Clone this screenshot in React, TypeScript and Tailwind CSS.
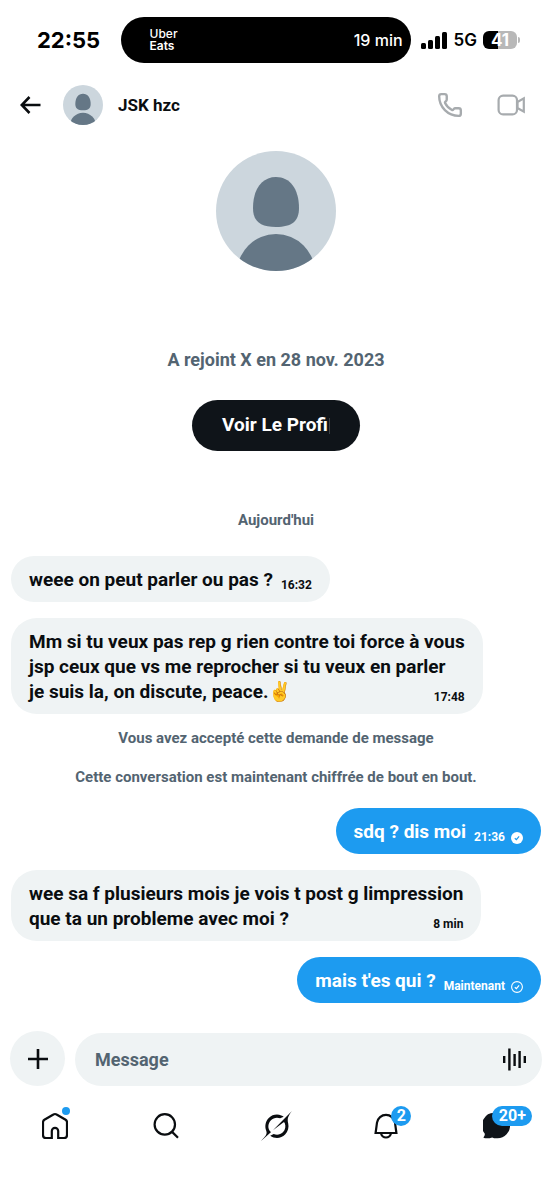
import { Phone } from "lucide-react";
import clsx from "clsx";

type Message = {
  text: string;
  time: string;
  mine?: boolean;
  status?: "read" | "sent";
};

type Entry = Message | { notice: string };

const entries: Entry[] = [
  { text: "weee on peut parler ou pas ?", time: "16:32" },
  {
    text: "Mm si tu veux pas rep g rien contre toi force à vous\njsp ceux que vs me reprocher si tu veux en parler\nje suis la, on discute, peace.✌️",
    time: "17:48",
  },
  { notice: "Vous avez accepté cette demande de message" },
  { notice: "Cette conversation est maintenant chiffrée de bout en bout." },
  { text: "sdq ? dis moi", time: "21:36", mine: true, status: "read" },
  {
    text: "wee sa f plusieurs mois je vois t post g limpression\nque ta un probleme avec moi ?",
    time: "8 min",
  },
  { text: "mais t'es qui ?", time: "Maintenant", mine: true, status: "sent" },
];

function Avatar({ className }: { className: string }) {
  return (
    <svg viewBox="0 0 120 120" className={clsx("shrink-0 rounded-full", className)} aria-hidden="true">
      <rect width="120" height="120" fill="#ccd6dd" />
      <path
        d="M60 26c14 0 23 12 23 31 0 13-7 19-23 19s-23-6-23-19c0-19 9-31 23-31z"
        fill="#657786"
      />
      <circle cx="60" cy="122" r="39" fill="#657786" />
    </svg>
  );
}

function StatusBar() {
  return (
    <div className="flex items-center pt-[17px] pr-8 pl-[37px] font-[Inter,sans-serif] text-black">
      <span className="flex-1 text-[22px] leading-7 font-bold">22:55</span>
      <div className="flex h-[46px] w-[290px] items-center justify-between rounded-full bg-black pr-2 pl-[29px] text-white">
        <div className="text-xs leading-3">
          <div className="font-medium">Uber</div>
          <div className="font-semibold">Eats</div>
        </div>
        <span className="text-base font-medium">19 min</span>
      </div>
      <div className="flex flex-1 items-center gap-[6px] pl-[10px]">
        <svg width="27" height="17" viewBox="0 0 27 17" className="shrink-0" aria-hidden="true">
          <rect x="0" y="11" width="5" height="6" rx="1.5" />
          <rect x="7" y="8" width="5" height="9" rx="1.5" />
          <rect x="14" y="4" width="5" height="13" rx="1.5" />
          <rect x="21" y="0" width="5" height="17" rx="1.5" />
        </svg>
        <span className="text-[17px] leading-7 font-semibold">5G</span>
        <div className="flex shrink-0 items-center gap-px">
          <div className="flex h-[18px] w-[34px] items-center justify-center rounded-md bg-[linear-gradient(90deg,#000_44%,#b8b8b8_44%)] text-[17px] leading-none font-bold text-white">
            41
          </div>
          <div className="h-[6px] w-[2px] rounded-r-full bg-[#b8b8b8]" />
        </div>
      </div>
    </div>
  );
}

function Header() {
  return (
    <header className="flex items-center pt-[22px] pr-[27px] pl-5">
      <button type="button" aria-label="Retour" className="mr-[22px]">
        <svg width="21" height="18" viewBox="0 0 21 18" fill="none" stroke="currentColor" strokeWidth="2.6">
          <path d="M9.500 1L1.800 9l7.700 8M1.800 9H20.500" />
        </svg>
      </button>
      <Avatar className="size-10" />
      <h1 className="ml-[15px] flex-1 text-[17px] leading-6 font-bold">JSK hzc</h1>
      <button type="button" aria-label="Appel audio" className="mr-[34px] text-[#a7abae]">
        <Phone size={26} strokeWidth={2.2} />
      </button>
      <button type="button" aria-label="Appel vidéo" className="text-[#a7abae]">
        <svg width="28" height="22" viewBox="0 0 28 22" fill="none" stroke="currentColor" strokeWidth="2.2">
          <rect x="1.6" y="1.6" width="18.4" height="18.8" rx="4.5" />
          <path d="M20.500 8l6.300-3.600v13.200L20.500 14z" />
        </svg>
      </button>
    </header>
  );
}

function StatusIcon({ status }: { status: "read" | "sent" }) {
  return (
    <svg width="12" height="12" viewBox="0 0 12 12" fill="none" className="shrink-0" aria-hidden="true">
      {status === "read" ? (
        <circle cx="6" cy="6" r="6" fill="#fff" />
      ) : (
        <circle cx="6" cy="6" r="5.4" stroke="#fff" strokeWidth="1.1" />
      )}
      <path d="M3.8 6.2l1.6 1.5 2.7-3.4" stroke={status === "read" ? "#1d9bf0" : "#fff"} strokeWidth="1.2" />
    </svg>
  );
}

function Bubble({ text, time, mine, status }: Message) {
  return (
    <li
      className={clsx(
        "max-w-[90%] rounded-[26px] px-[18px] pt-[11px] pb-[10px] text-[19px] leading-[25px] font-bold whitespace-pre-line",
        mine ? "self-end bg-[#1d9bf0] text-white" : "self-start bg-[#eff3f4]",
      )}
    >
      {text}
      <span className="float-right mt-[11px] -mb-1 ml-2 flex items-center gap-[6px] text-xs leading-[15px]">
        {time}
        {status && <StatusIcon status={status} />}
      </span>
    </li>
  );
}

function Composer() {
  return (
    <form className="mt-7 flex items-end gap-[10px] px-[10px]" onSubmit={(e) => e.preventDefault()}>
      <button
        type="button"
        aria-label="Ajouter"
        className="flex size-[55px] shrink-0 items-center justify-center rounded-full bg-[#eff3f4]"
      >
        <svg width="20" height="20" viewBox="0 0 20 20" stroke="currentColor" strokeWidth="2.6" aria-hidden="true">
          <path d="M10 0v20M0 10h20" />
        </svg>
      </button>
      <div className="flex h-[53px] flex-1 items-center rounded-full bg-[#eff3f4] pr-4 pl-5">
        <input
          type="text"
          aria-label="Message"
          placeholder="Message"
          className="min-w-0 flex-1 bg-transparent text-[18px] font-bold outline-none placeholder:text-[#536471]"
        />
        <button type="button" aria-label="Message vocal">
          <svg width="23" height="24" viewBox="0 0 23 24" stroke="currentColor" strokeWidth="2.4" aria-hidden="true">
            <path d="M1.2 8v7M6.4 .5v22M11.6 6v12M16.6 3v17M21.8 8v7" />
          </svg>
        </button>
      </div>
    </form>
  );
}

function NavBar() {
  const item = "flex flex-1 justify-center";
  const badge =
    "absolute -top-[5px] flex h-5 items-center justify-center rounded-full bg-[#1d9bf0] text-base leading-none font-bold text-white";

  return (
    <nav className="flex items-center pt-[25px]">
      <a href="#home" aria-label="Accueil" className={item}>
        <span className="relative">
          <svg width="26" height="30" viewBox="0 -2 26 30" fill="none" stroke="currentColor" strokeWidth="2.2">
            <path d="M9.8 25H4a3 3 0 0 1-3-3V9.3a3 3 0 0 1 1.4-2.5l9-5.3a3 3 0 0 1 3.2 0l9 5.3A3 3 0 0 1 25 9.3V22a3 3 0 0 1-3 3h-5.800v-7a3.2 3.2 0 0 0-6.4 0z" />
          </svg>
          <span className="absolute -top-1 -right-0.5 size-2 rounded-full bg-[#1d9bf0]" />
        </span>
      </a>
      <a href="#search" aria-label="Recherche" className={item}>
        <svg width="26" height="30" viewBox="0 -2 26 30" fill="none" stroke="currentColor" strokeWidth="2.2">
          <circle cx="11.8" cy="11.4" r="10.2" />
          <path d="M18.8 18.6l6.2 6.2" />
        </svg>
      </a>
      <a href="#grok" aria-label="Grok" className={item}>
        <svg width="31" height="30" viewBox="0 0 33 32" fill="currentColor">
          <path d="M12.745 20.54l10.97-8.19c.539-.4 1.307-.244 1.564.38 1.349 3.288.746 7.241-1.938 9.955-2.683 2.714-6.417 3.31-9.83 1.954l-3.728 1.745c5.347 3.697 11.84 2.782 15.898-1.324 3.219-3.255 4.216-7.692 3.284-11.693l.008.009c-1.351-5.878.332-8.227 3.782-13.031L33 0l-4.54 4.59v-.014L12.743 20.544m-2.263 1.987c-3.837-3.707-3.175-9.446.1-12.755 2.42-2.449 6.388-3.448 9.852-1.979l3.72-1.737c-.67-.49-1.53-1.017-2.515-1.387-4.455-1.854-9.789-.931-13.41 2.728-3.483 3.523-4.579 8.94-2.697 13.561 1.405 3.454-.899 5.898-3.22 8.364C1.49 30.2.666 31.074 0 32l10.478-9.466" />
        </svg>
      </a>
      <a href="#notifications" aria-label="Notifications" className={item}>
        <span className="relative">
          <svg width="24" height="30" viewBox="0 -2 24 30" fill="none" stroke="currentColor" strokeWidth="2.2">
            <path d="M1.6 20L3 9.6a9.1 9.1 0 0 1 18 0L22.4 20z" />
            <path d="M7 20.5c.8 2.6 2.6 4 5 4s4.200-1.400 5-4" />
          </svg>
          <span className={clsx(badge, "left-[17px] w-5")}>2</span>
        </span>
      </a>
      <a href="#messages" aria-label="Messages" className={item}>
        <span className="relative">
          <svg width="27" height="30" viewBox="0 -2 27 30" fill="#0f1419">
            <path d="M13.500 0A13 12.600 0 0 1 14.500 25.300c-2 .2-3.800-.1-5.300-.8-2.700.9-5.500 1-8.200.6-.5-.1-.6-.6-.3-1 .9-1.100 1.300-2.200 1-3.500A12.700 12.700 0 0 1 13.500 0z" />
          </svg>
          <span className={clsx(badge, "left-[9px] w-10")}>20+</span>
        </span>
      </a>
    </nav>
  );
}

export default function App() {
  return (
    <div className="min-h-screen bg-white font-[Roboto,'Noto_Color_Emoji',sans-serif] text-[#0a0d10]">
      <StatusBar />
      <Header />
      <main>
        <section className="flex flex-col items-center pt-[26px]">
          <Avatar className="size-[120px]" />
          <p className="mt-[77px] text-[18px] leading-6 font-bold text-[#536471]">A rejoint X en 28 nov. 2023</p>
          <button
            type="button"
            className="mt-[28px] flex h-[51px] items-center gap-px rounded-full bg-[#0f1419] px-[30px] text-[19px] font-bold text-white"
          >
            Voir Le Profi
            <span className="h-4 w-px bg-[#3a4046]" />
          </button>
        </section>
        <h2 className="mt-[57px] text-center text-[15px] leading-6 font-bold text-[#536471]">Aujourd'hui</h2>
        <ul className="mt-6 flex flex-col gap-4 px-[11px]">
          {entries.map((entry) =>
            "notice" in entry ? (
              <li
                key={entry.notice}
                className="mb-[6px] text-center text-[15px] leading-[17px] font-bold text-[#536471]"
              >
                {entry.notice}
              </li>
            ) : (
              <Bubble key={entry.text} {...entry} />
            ),
          )}
        </ul>
      </main>
      <Composer />
      <NavBar />
    </div>
  );
}
